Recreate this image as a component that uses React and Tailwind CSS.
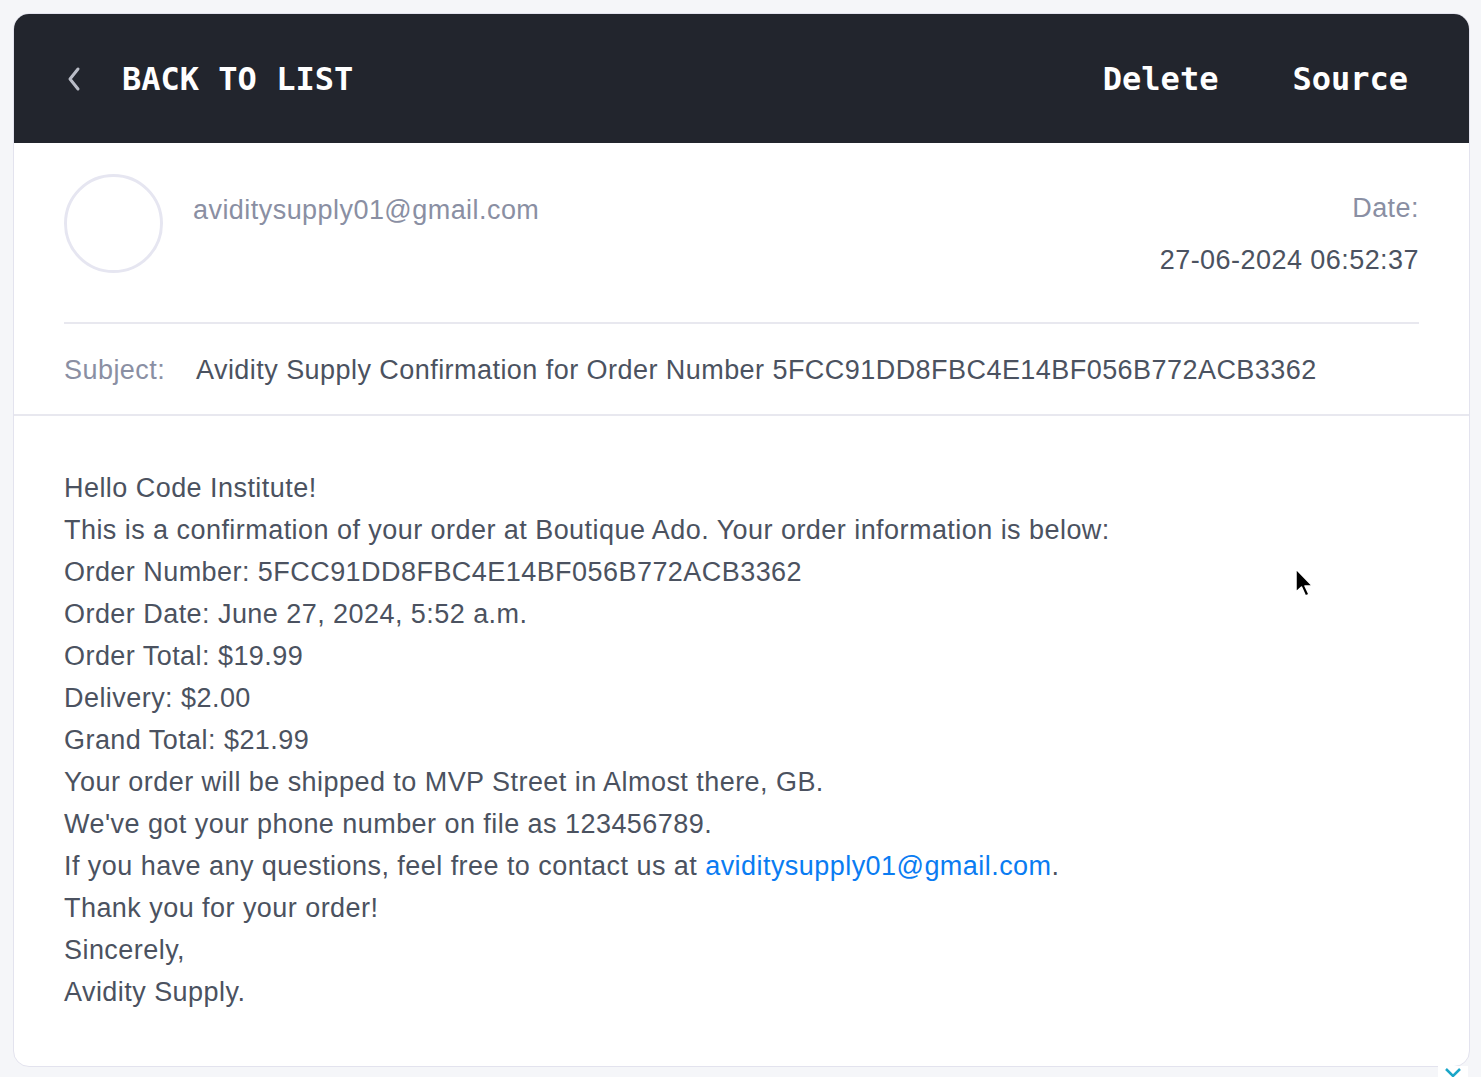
import React from "react";

const lines = [
  "Hello Code Institute!",
  "This is a confirmation of your order at Boutique Ado. Your order information is below:",
  "Order Number: 5FCC91DD8FBC4E14BF056B772ACB3362",
  "Order Date: June 27, 2024, 5:52 a.m.",
  "Order Total: $19.99",
  "Delivery: $2.00",
  "Grand Total: $21.99",
  "Your order will be shipped to MVP Street in Almost there, GB.",
  "We've got your phone number on file as 123456789.",
];

export default function App() {
  return (
    <div className="relative min-h-[1077px] bg-[#f5f6f9] pt-[13px] pl-[13px] font-['Liberation_Sans',Arial,sans-serif]">
      <div className="w-[1457px] h-[1054px] overflow-hidden rounded-[16px] border border-[#e3e3ee] bg-white">
        {/* top bar */}
        <div className="flex h-[129px] items-center bg-[#22252d] pl-[52px] pr-[61px] font-['DejaVu_Sans_Mono',monospace] text-[32px] font-bold text-white">
          <svg width="16" height="26" viewBox="0 0 16 26" className="mr-[40px]">
            <path d="M12 3 L4 13 L12 23" fill="none" stroke="#b9bcc6" strokeWidth="3" strokeLinecap="round" strokeLinejoin="round" />
          </svg>
          <span>BACK TO LIST</span>
          <div className="ml-auto flex gap-[74px]">
            <span>Delete</span>
            <span>Source</span>
          </div>
        </div>

        {/* sender */}
        <div className="px-[50px] pt-[31px] text-[27px] tracking-[0.45px]">
          <div className="flex">
            <div className="h-[99px] w-[99px] rounded-full border-[3px] border-[#e6e6f1]" />
            <div className="ml-[30px] mt-[20px] leading-[32px] text-[#8a8fa3]">aviditysupply01@gmail.com</div>
            <div className="ml-auto mt-[18px] text-right leading-[32px]">
              <div className="text-[#8a8fa3]">Date:</div>
              <div className="mt-[20px] text-[#4b5260]">27-06-2024 06:52:37</div>
            </div>
          </div>
          <div className="mt-[46px] flex border-t-2 border-[#e8e8ef] pt-[30px] pb-[28px] leading-[32px]">
            <span className="w-[132px] text-[#8a8fa3]">Subject:</span>
            <span className="text-[#4b5260]">Avidity Supply Confirmation for Order Number 5FCC91DD8FBC4E14BF056B772ACB3362</span>
          </div>
        </div>

        {/* body */}
        <div className="border-t-2 border-[#e8e8ef] px-[50px] pt-[51px] text-[27px] leading-[42px] tracking-[0.45px] text-[#4b5260]">
          {lines.map((l) => (
            <div key={l}>{l}</div>
          ))}
          <div>
            If you have any questions, feel free to contact us at{" "}
            <span className="text-[#0a7cf2]">aviditysupply01@gmail.com</span>.
          </div>
          <div>Thank you for your order!</div>
          <div>Sincerely,</div>
          <div>Avidity Supply.</div>
        </div>
      </div>

      {/* mouse pointer */}
      <svg className="absolute left-[1294px] top-[568px]" width="22" height="32" viewBox="0 0 22 32">
        <path d="M2 1 L2 24 L7.5 19 L11.5 28 L15 26.5 L11 18 L18.5 18 Z" fill="#000" stroke="#fff" strokeWidth="1.5" strokeLinejoin="round" />
      </svg>

      {/* scroll hint chevron */}
      <div className="absolute left-[1438px] top-[1066px] flex h-[11px] w-[30px] items-start justify-center bg-white">
        <svg width="22" height="11" viewBox="0 0 22 11">
          <path d="M4 3 L11 10 L18 3" fill="none" stroke="#1aa6c8" strokeWidth="2.5" />
        </svg>
      </div>
    </div>
  );
}
